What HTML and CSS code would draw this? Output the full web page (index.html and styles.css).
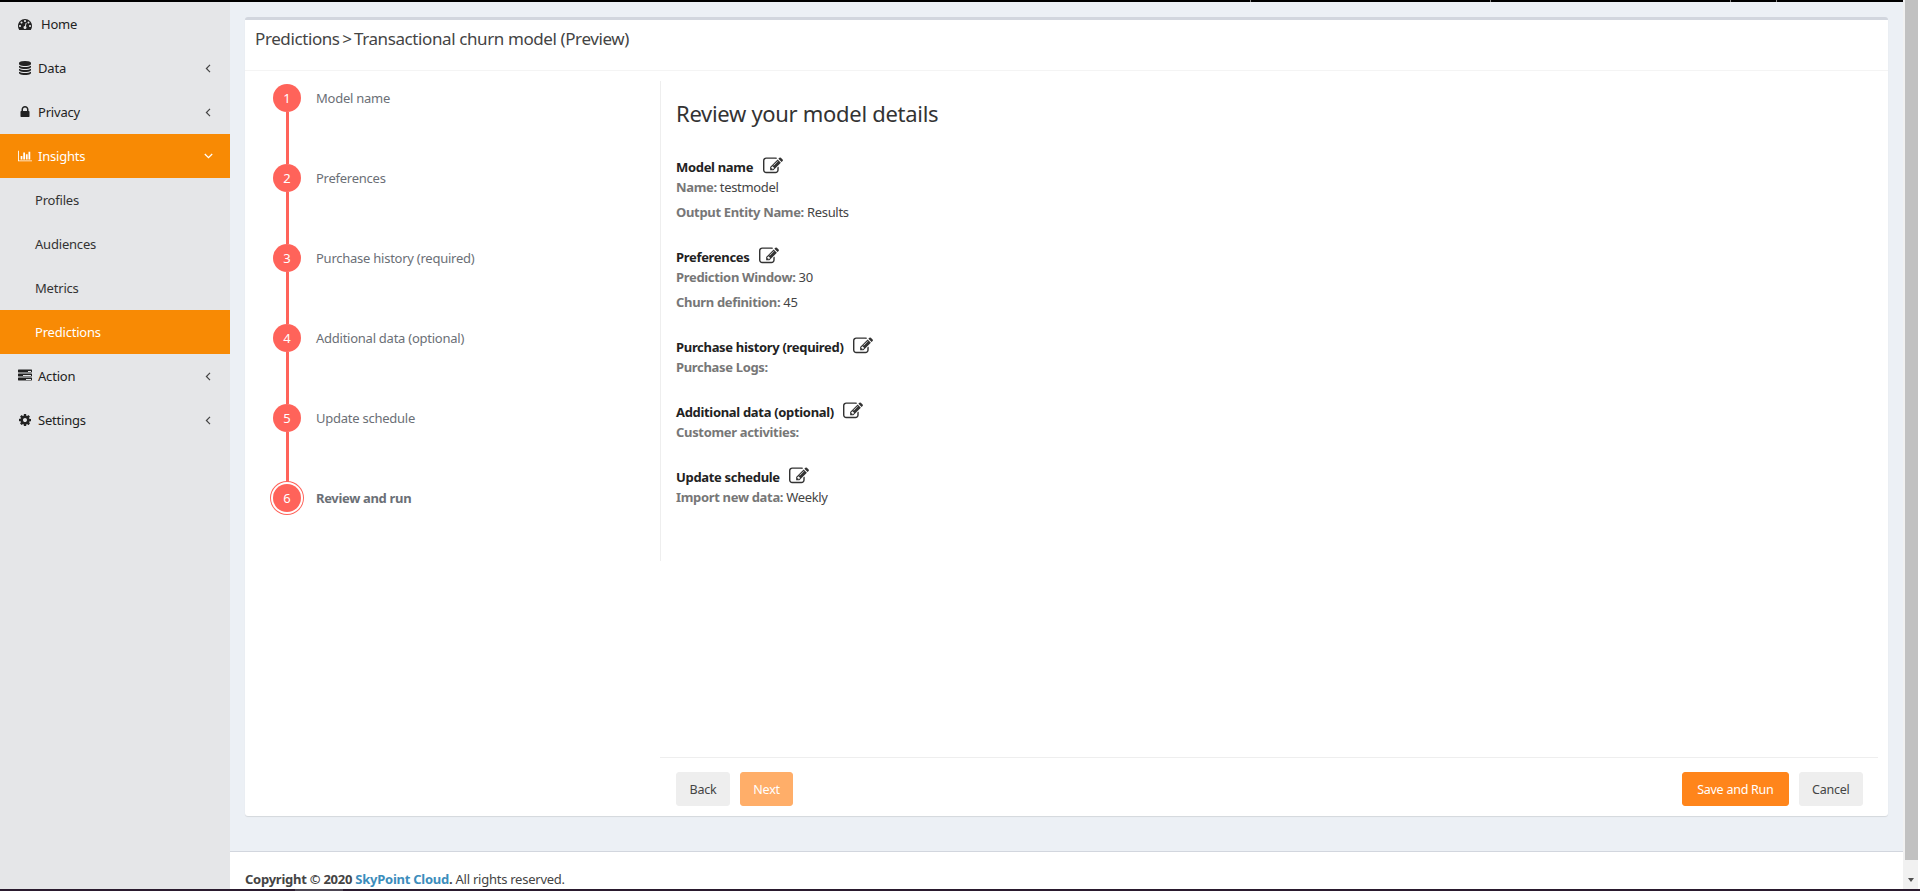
FILE: index.html
```html
<!DOCTYPE html>
<html lang="en">
<head>
<meta charset="utf-8">
<title>Predictions</title>
<link rel="stylesheet" href="styles.css">
</head>
<body>
<svg class="defs" width="0" height="0" aria-hidden="true">
  <symbol id="i-tach" viewBox="0 0 1792 1792"><path d="M384 1152q0-53-37.5-90.5T256 1024t-90.5 37.5T128 1152t37.5 90.5T256 1280t90.5-37.5T384 1152zm192-448q0-53-37.5-90.5T448 576t-90.5 37.5T320 704t37.5 90.5T448 832t90.5-37.5T576 704zm428 481l101-382q6-26-7.5-48.5T1059 725t-48 6.5-30 39.5l-101 382q-60 5-107 43.5t-63 98.5q-20 77 20 146t117 89 146-20 89-117q16-60-6-117t-72-91zm660-33q0-53-37.5-90.5T1536 1024t-90.5 37.5-37.5 90.5 37.5 90.5 90.5 37.5 90.5-37.5 37.5-90.5zm-640-640q0-53-37.5-90.5T896 384t-90.5 37.5T768 512t37.5 90.5T896 640t90.5-37.5T1024 512zm448 192q0-53-37.5-90.5T1344 576t-90.5 37.5T1216 704t37.5 90.5 90.5 37.5 90.5-37.5T1472 704zm320 448q0 261-141 483-19 29-54 29H195q-35 0-54-29Q0 1414 0 1152q0-182 71-348t191-286 286-191 348-71 348 71 286 191 191 286 71 348z"/></symbol>
  <symbol id="i-db" viewBox="0 0 1792 1792"><path d="M896 768q237 0 443-43t325-127v170q0 69-103 128t-280 93.5-385 34.5-385-34.5T231 896 128 768V598q119 84 325 127t443 43zm0 768q237 0 443-43t325-127v170q0 69-103 128t-280 93.5-385 34.5-385-34.5-280-93.5-103-128v-170q119 84 325 127t443 43zm0-384q237 0 443-43t325-127v170q0 69-103 128t-280 93.5-385 34.5-385-34.5-280-93.5-103-128V982q119 84 325 127t443 43zM896 0q208 0 385 34.5t280 93.5 103 128v128q0 69-103 128t-280 93.5T896 640t-385-34.5T231 512 128 384V256q0-69 103-128t280-93.5T896 0z"/></symbol>
  <symbol id="i-lock" viewBox="0 0 1792 1792"><path d="M640 768h512V576q0-106-75-181t-181-75-181 75-75 181v192zm832 96v576q0 40-28 68t-68 28H416q-40 0-68-28t-28-68V864q0-40 28-68t68-28h32V576q0-184 132-316t316-132 316 132 132 316v192h32q40 0 68 28t28 68z"/></symbol>
  <symbol id="i-bar" viewBox="0 0 2048 1792"><path d="M640 896v512H384V896h256zm384-512v1024H768V384h256zm1024 1152v128H0V128h128v1408h1920zm-640-896v768h-256V640h256zm384-384v1152h-256V256h256z"/></symbol>
  <symbol id="i-tasks" viewBox="0 0 1792 1792"><path d="M1024 1408h640v-128h-640v128zM640 896h1024V768H640v128zm640-512h384V256h-384v128zm512 768v256q0 26-19 45t-45 19H64q-26 0-45-19t-19-45v-256q0-26 19-45t45-19h1664q26 0 45 19t19 45zm0-512v256q0 26-19 45t-45 19H64q-26 0-45-19t-19-45V640q0-26 19-45t45-19h1664q26 0 45 19t19 45zm0-512v256q0 26-19 45t-45 19H64q-26 0-45-19t-19-45V128q0-26 19-45t45-19h1664q26 0 45 19t19 45z"/></symbol>
  <symbol id="i-cog" viewBox="0 0 1792 1792"><path d="M1152 896q0-106-75-181t-181-75-181 75-75 181 75 181 181 75 181-75 75-181zm512-109v222q0 12-8 23t-20 13l-185 28q-19 54-39 91 35 50 107 138 10 12 10 25t-9 23q-27 37-99 108t-94 71q-12 0-26-9l-138-108q-44 23-91 38-16 136-29 186-7 28-36 28H785q-14 0-24.5-8.5T749 1634l-28-184q-49-16-90-37l-141 107q-10 9-25 9-14 0-25-11-126-114-165-168-7-10-7-23 0-12 8-23 15-21 51-66.5t54-70.5q-27-50-41-99l-183-27q-13-2-21-12.5t-8-23.5V785q0-12 8-23t19-13l186-28q14-46 39-92-40-57-107-138-10-12-10-24 0-10 9-23 26-36 98.5-107.5T465 265q13 0 26 10l138 107q44-23 91-38 16-136 29-186 7-28 36-28h222q14 0 24.5 8.5T1043 160l28 184q49 16 90 37l142-107q9-9 24-9 13 0 25 10 129 119 165 170 7 8 7 22 0 12-8 23-15 21-51 66.5t-54 70.5q26 50 41 98l183 28q13 2 21 12.5t8 23.5z"/></symbol>
  <symbol id="i-edit" viewBox="0 0 1792 1792"><path d="M888 1184l116-116-152-152-116 116v56h96v96h56zm440-720q-16-16-33 1L945 815q-17 17-1 33t33-1l350-350q17-17 1-33zm80 594v190q0 119-84.5 203.5T1120 1536H288q-119 0-203.5-84.5T0 1248V416q0-119 84.5-203.5T288 128h832q63 0 117 25 15 7 18 23 3 17-9 29l-49 49q-14 14-32 8-23-6-45-6H288q-66 0-113 47t-47 113v832q0 66 47 113t113 47h832q66 0 113-47t47-113V1058q0-13 9-22l64-64q15-15 35-7t20 29zm-96-738l288 288-672 672H640V992zm444 132l-92 92-288-288 92-92q28-28 68-28t68 28l152 152q28 28 28 68t-28 68z"/></symbol>
  <symbol id="i-left" viewBox="0 0 6 9"><path d="M5 .8 1.400 4.500 5 8.200" fill="none" stroke="currentColor" stroke-width="1.200"/></symbol>
  <symbol id="i-down" viewBox="0 0 9 6"><path d="M.8 1 4.500 4.600 8.200 1" fill="none" stroke="currentColor" stroke-width="1.300"/></symbol>
</svg>

<div class="topbar"><span class="tick"></span><span class="tick"></span><span class="tick tick-short"></span></div>
<div class="shell">
  <div class="app">
    <nav class="sidebar">
      <a class="nav-item"><svg class="nav-icon"><use href="#i-tach"/></svg><span class="nav-label home-label">Home</span></a>
      <a class="nav-item"><svg class="nav-icon"><use href="#i-db"/></svg><span class="nav-label">Data</span><svg class="caret"><use href="#i-left"/></svg></a>
      <a class="nav-item"><svg class="nav-icon"><use href="#i-lock"/></svg><span class="nav-label">Privacy</span><svg class="caret"><use href="#i-left"/></svg></a>
      <a class="nav-item active"><svg class="nav-icon"><use href="#i-bar"/></svg><span class="nav-label">Insights</span><svg class="caret-down"><use href="#i-down"/></svg></a>
      <a class="nav-sub">Profiles</a>
      <a class="nav-sub">Audiences</a>
      <a class="nav-sub">Metrics</a>
      <a class="nav-sub active">Predictions</a>
      <a class="nav-item"><svg class="nav-icon"><use href="#i-tasks"/></svg><span class="nav-label">Action</span><svg class="caret"><use href="#i-left"/></svg></a>
      <a class="nav-item"><svg class="nav-icon"><use href="#i-cog"/></svg><span class="nav-label">Settings</span><svg class="caret"><use href="#i-left"/></svg></a>
    </nav>
    <div class="main">
      <main class="content">
        <section class="card">
          <header class="card-head"><span>Predictions</span><span class="crumb-sep">&gt;</span><span>Transactional churn model (Preview)</span></header>
          <div class="card-body">
            <ol class="steps">
              <li class="step"><span class="dot">1</span><span class="step-label">Model name</span></li>
              <li class="step"><span class="dot">2</span><span class="step-label">Preferences</span></li>
              <li class="step"><span class="dot">3</span><span class="step-label">Purchase history (required)</span></li>
              <li class="step"><span class="dot">4</span><span class="step-label">Additional data (optional)</span></li>
              <li class="step"><span class="dot">5</span><span class="step-label">Update schedule</span></li>
              <li class="step current"><span class="dot">6</span><span class="step-label">Review and run</span></li>
            </ol>
            <div class="panel">
              <div class="review">
                <h2 class="review-title">Review your model details</h2>
                <div class="group">
                  <h3 class="group-title">Model name<svg class="edit"><use href="#i-edit"/></svg></h3>
                  <p class="line"><b>Name:</b> testmodel</p>
                  <p class="line"><b>Output Entity Name:</b> Results</p>
                </div>
                <div class="group">
                  <h3 class="group-title">Preferences<svg class="edit"><use href="#i-edit"/></svg></h3>
                  <p class="line"><b>Prediction Window:</b> 30</p>
                  <p class="line"><b>Churn definition:</b> 45</p>
                </div>
                <div class="group">
                  <h3 class="group-title">Purchase history (required)<svg class="edit"><use href="#i-edit"/></svg></h3>
                  <p class="line"><b>Purchase Logs:</b></p>
                </div>
                <div class="group">
                  <h3 class="group-title">Additional data (optional)<svg class="edit"><use href="#i-edit"/></svg></h3>
                  <p class="line"><b>Customer activities:</b></p>
                </div>
                <div class="group">
                  <h3 class="group-title">Update schedule<svg class="edit"><use href="#i-edit"/></svg></h3>
                  <p class="line"><b>Import new data:</b> Weekly</p>
                </div>
              </div>
            </div>
          </div>
          <div class="actions-wrap">
            <div class="actions">
              <div class="btn-group">
                <button class="btn">Back</button>
                <button class="btn btn-muted">Next</button>
              </div>
              <div class="btn-group">
                <button class="btn btn-primary">Save and Run</button>
                <button class="btn">Cancel</button>
              </div>
            </div>
          </div>
        </section>
      </main>
      <footer class="footer"><b>Copyright © 2020 <a class="brand">SkyPoint Cloud</a>.</b> All rights reserved.</footer>
    </div>
  </div>
  <div class="scrollbar"><div class="thumb"></div><div class="arrow"></div></div>
</div>
<div class="bottombar"><span class="bar-seg"></span></div>
</body>
</html>
```
FILE: styles.css
```css
* { box-sizing: border-box; }
html, body { height: 100%; margin: 0; overflow: hidden; }
body {
  display: flex;
  flex-direction: column;
  font-family: "Noto Sans", "Open Sans", sans-serif;
  font-size: 13px;
  color: #333;
  background: #ecf0f5;
}
.defs { display: block; height: 0; }
.topbar { height: 2px; background: #000; flex: none; display: flex; padding-left: 1250px; }
.tick { width: 240px; height: 2px; border-left: 1px solid #888; flex: none; }
.tick-short { width: 47px; border-right: 1px solid #888; }
.bottombar { height: 2px; background: #2a1a2e; flex: none; padding-left: 295px; }
.bar-seg { display: block; width: 48px; height: 2px; background: #4c4552; }
.shell { flex: 1; display: flex; min-height: 0; }
.app { flex: 1; display: flex; min-width: 0; }

.sidebar { width: 230px; flex: none; background: #e5e6e8; }
.nav-item, .nav-sub { display: flex; align-items: center; height: 44px; color: #222; letter-spacing: -0.2px; }
.nav-item { padding-left: 18px; }
.nav-sub { padding-left: 35px; color: #333; }
.nav-item.active, .nav-sub.active { background: #f88a04; color: #fff; }
.nav-icon { width: 14px; height: 14px; fill: currentColor; flex: none; }
.nav-label { margin-left: 6px; }
.home-label { margin-left: 9px; }
.caret { width: 6px; height: 9px; margin-left: auto; margin-right: 19px; color: #444; }
.caret-down { width: 9px; height: 6px; margin-left: auto; margin-right: 17px; color: #fff; }

.main { flex: 1; display: flex; flex-direction: column; min-width: 0; }
.content { flex: 1; padding: 15px 15px 35px 15px; min-height: 0; display: flex; }
.card {
  flex: 1;
  display: flex;
  flex-direction: column;
  background: #fff;
  border-top: 3px solid #d2d6de;
  border-radius: 3px;
  box-shadow: 0 1px 1px rgba(0,0,0,.1);
  min-width: 0;
}
.card-head {
  height: 51px;
  padding: 5px 10px 0;
  border-bottom: 1px solid #f4f4f4;
  font-size: 17px;
  line-height: 28px;
  color: #444;
  letter-spacing: -0.4px;
}
.crumb-sep { margin: 0 2.5px; }
.card-body { flex: 1; display: flex; padding: 10px 10px 0 0; min-height: 0; }

.steps { list-style: none; margin: 0; padding: 3px 0 0 28px; width: 415px; flex: none; }
.step { position: relative; display: flex; align-items: center; height: 28px; margin-bottom: 52px; color: #6b6f76; }
.step:not(:last-child)::after {
  content: "";
  position: absolute;
  left: 12.5px;
  top: 28px;
  width: 3px;
  height: 52px;
  background: #ff635a;
}
.dot {
  width: 28px;
  height: 28px;
  border-radius: 50%;
  background: #ff635a;
  color: #fff;
  display: flex;
  align-items: center;
  justify-content: center;
  font-size: 13px;
  flex: none;
}
.current .dot { box-shadow: 0 0 0 2px #fff, 0 0 0 3px #ff635a; }
.step-label { margin-left: 15px; letter-spacing: -0.25px; }
.current .step-label { font-weight: 700; letter-spacing: -0.33px; }

.panel { flex: 1; height: 480px; border-left: 1px solid #eee; padding-left: 15px; }
.review-title { margin: 17px 0 0; font-size: 22px; line-height: 30px; font-weight: 400; color: #333; letter-spacing: -0.3px; }
.group { margin-top: 25px; }
.review-title + .group { margin-top: 29px; }
.group-title { display: flex; align-items: center; margin: 0; height: 20px; font-size: 13px; font-weight: 700; color: #222; letter-spacing: -0.32px; }
.edit { width: 20px; height: 20px; fill: #333; margin-left: 9.5px; margin-top: -2px; }
.line { margin: 0 0 5px; height: 20px; line-height: 20px; color: #444; letter-spacing: -0.33px; }
.line b { color: #777; }

.actions-wrap { padding: 0 10px 0 415px; }
.actions {
  display: flex;
  justify-content: space-between;
  border-top: 1px solid #eee;
  padding: 14px 15px 10px 16px;
}
.btn-group { display: flex; gap: 10px; }
.btn {
  height: 34px;
  padding: 0 12.5px;
  border: 1px solid #eee;
  border-radius: 3px;
  background: #eee;
  color: #444;
  font: 12.5px "Noto Sans", sans-serif;
  letter-spacing: -0.25px;
}
.btn-primary { padding: 0 14px; background: #ff851b; border-color: #ff851b; color: #fff; }
.btn-muted { background: #ffae69; border-color: #ffae69; color: #fff; }

.footer {
  height: 38px;
  flex: none;
  background: #fff;
  border-top: 1px solid #d2d6de;
  padding: 17px 15px 0;
  line-height: 20px;
  color: #444;
  letter-spacing: -0.25px;
}
.brand { color: #3c8dbc; }

.scrollbar { width: 17px; flex: none; margin-top: -2px; background: #f1f1f1; border-right: 2px solid #fff; padding-left: 2px; display: flex; flex-direction: column; }
.thumb { width: 13px; height: 860px; background: #c1c1c1; flex: none; }
.arrow {
  margin: 18px 0 0 3px;
  width: 0;
  height: 0;
  border-left: 3.5px solid transparent;
  border-right: 3.5px solid transparent;
  border-top: 4px solid #505050;
}
```
